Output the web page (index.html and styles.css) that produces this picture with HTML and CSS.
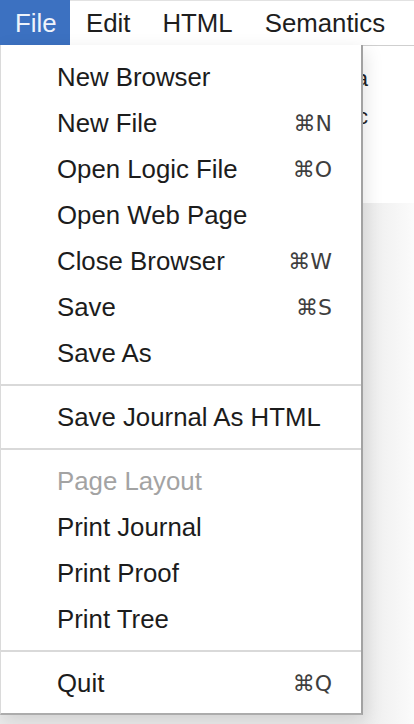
FILE: index.html
```html
<!DOCTYPE html>
<html>
<head>
<meta charset="utf-8">
<link rel="stylesheet" href="styles.css">
</head>
<body>
<div class="app">
  <div class="menubar">
    <span class="mb-item active">File</span>
    <span class="mb-item">Edit</span>
    <span class="mb-item">HTML</span>
    <span class="mb-item">Semantics</span>
  </div>
  <div class="workspace">
    <div class="panel">
      <p class="pline">a</p>
      <p class="pline">c</p>
    </div>
    <div class="backdrop"></div>
  </div>
  <div class="dropdown">
    <div class="group">
      <div class="mi"><span>New Browser</span></div>
      <div class="mi"><span>New File</span><span class="sc">⌘N</span></div>
      <div class="mi"><span>Open Logic File</span><span class="sc">⌘O</span></div>
      <div class="mi"><span>Open Web Page</span></div>
      <div class="mi"><span>Close Browser</span><span class="sc">⌘W</span></div>
      <div class="mi"><span>Save</span><span class="sc">⌘S</span></div>
      <div class="mi"><span>Save As</span></div>
    </div>
    <div class="sep"></div>
    <div class="group">
      <div class="mi"><span>Save Journal As HTML</span></div>
    </div>
    <div class="sep"></div>
    <div class="group">
      <div class="mi disabled"><span>Page Layout</span></div>
      <div class="mi"><span>Print Journal</span></div>
      <div class="mi"><span>Print Proof</span></div>
      <div class="mi"><span>Print Tree</span></div>
    </div>
    <div class="sep"></div>
    <div class="group">
      <div class="mi"><span>Quit</span><span class="sc">⌘Q</span></div>
    </div>
  </div>
</div>
</body>
</html>
```
FILE: styles.css
```css
* { box-sizing: border-box; }
html, body {
  margin: 0;
  padding: 0;
  width: 414px;
  height: 724px;
  overflow: hidden;
  background: #f8f8f8;
  font-family: "Liberation Sans", Arial, Helvetica, sans-serif;
}
.app {
  position: relative;
  width: 414px;
  height: 724px;
  display: flex;
  flex-direction: column;
}
.menubar {
  height: 46px;
  display: flex;
  align-items: stretch;
  background: #ffffff;
  border-top: 1px solid #e2e2e2;
  border-bottom: 1px solid #cfcfcf;
}
.mb-item {
  display: flex;
  align-items: center;
  padding: 0 16px 0;
  font-size: 25.8px;
  color: #1e1e1e;
}
.mb-item.active {
  width: 70px;
  padding-left: 15px;
  margin-top: -1px;
  margin-bottom: -1px;
  background: #3c71c1;
  color: #eef3fb;
}
.workspace {
  flex: 1;
  display: flex;
  flex-direction: column;
}
.panel {
  height: 157px;
  background: #ffffff;
  width: 414px;
  padding: 14px 0 0 0;
}
.pline {
  margin: 0;
  width: 368px;
  text-align: right;
  font-family: "Liberation Sans", Arial, sans-serif;
  font-size: 22px;
  line-height: 38px;
  color: #222;
}
.backdrop {
  flex: 1;
  background: linear-gradient(to right, #ececec 363px, #fbfbfb 414px);
}
.dropdown {
  position: absolute;
  top: 45px;
  left: 0;
  width: 363px;
  background: #ffffff;
  border-left: 1px solid #dadada;
  border-right: 2px solid #a2a2a2;
  border-bottom: 2px solid #acacac;
  padding: 9px 0 7px;
  box-shadow: 2px 6px 18px rgba(0, 0, 0, 0.12);
}
.mi {
  height: 46px;
  display: flex;
  align-items: center;
  justify-content: space-between;
  padding: 0 29px 0 56px;
  font-size: 25.8px;
  color: #1c1c1c;
}
.mi.disabled { color: #a3a3a3; }
.sc {
  color: #3e3e3e;
  font-family: "DejaVu Sans", "Liberation Sans", sans-serif;
  font-size: 22px;
}
.sep {
  height: 2px;
  margin: 8px 0;
  background: #d9d9d9;
}
```
